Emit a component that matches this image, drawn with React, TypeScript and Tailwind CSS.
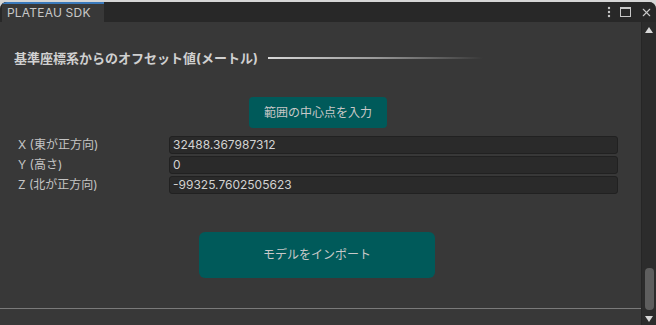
import { X } from "lucide-react"

const jp = "font-['Inter','Noto_Sans_CJK_JP',sans-serif]"

function Field({ label, value }: { label: string; value: string }) {
  return (
    <div className="flex items-center h-[20px]">
      <div className="w-[169px] pl-[18px] text-[12px] text-[#c4c4c4] leading-none">{label}</div>
      <div className="w-[449px] h-[18px] bg-[#2a2a2a] border border-[#212121] rounded-[3px] flex items-center px-[3px] text-[12px] text-[#d2d2d2] leading-none">
        {value}
      </div>
    </div>
  )
}

export default function App() {
  return (
    <div className={`w-[656px] h-[325px] bg-[#d6d6d6] pt-[2px] ${jp}`}>
      <div className="h-[323px] flex flex-col rounded-t-[7px] overflow-hidden bg-[#383838]">
        {/* tab bar */}
        <div className="h-[20px] bg-[#282828] flex items-stretch shrink-0">
          <div className="w-[102px] ml-[2px] bg-[#383838] border-t-2 border-[#3a79bb] flex items-center pl-[5px] text-[12px] text-[#c8c8c8] tracking-[0.2px]">
            PLATEAU SDK
          </div>
          <div className="flex-1" />
          <div className="flex items-center gap-[9px] pr-[3px] text-[#c8c8c8]">
            <svg width="4" height="12" viewBox="0 0 4 12">
              <circle cx="2" cy="2" r="1.2" fill="#c8c8c8" />
              <circle cx="2" cy="6" r="1.2" fill="#c8c8c8" />
              <circle cx="2" cy="10" r="1.2" fill="#c8c8c8" />
            </svg>
            <div className="w-[11px] h-[10px] border border-[#c8c8c8] border-t-2" />
            <X size={13} strokeWidth={2} />
          </div>
        </div>

        <div className="flex flex-1 min-h-0">
          {/* main */}
          <div className="flex-1 flex flex-col">
            <div className="flex items-center pl-[14px] pt-[26px] h-[46px]">
              <span className="text-[13px] font-bold text-[#d0d0d0] leading-[20px]">基準座標系からのオフセット値(メートル)</span>
              <div className="ml-[10px] w-[215px] h-[2px] bg-gradient-to-r from-[#d8d8d8] via-[#9a9a9a] to-transparent" />
            </div>

            <div className="flex justify-center pt-[29px] pr-[5px]">
              <div className="w-[138px] h-[31px] rounded-[4px] bg-[#005a5a] flex items-center justify-center text-[12px] text-[#c8c8c8]">
                範囲の中心点を入力
              </div>
            </div>

            <div className="flex flex-col pt-[7px]">
              <Field label="X (東が正方向)" value="32488.367987312" />
              <Field label="Y (高さ)" value="0" />
              <Field label="Z (北が正方向)" value="-99325.7602505623" />
            </div>

            <div className="flex justify-center pt-[37px] pr-[7px]">
              <div className="w-[236px] h-[46px] rounded-[6px] bg-[#005a5a] flex items-center justify-center text-[12px] text-[#c8c8c8]">
                モデルをインポート
              </div>
            </div>

            <div className="flex-1" />
            <div className="h-[1px] bg-[#7a7a7a] mb-[16px]" />
          </div>

          {/* scrollbar */}
          <div className="w-[15px] bg-[#2c2c2c] border-l border-[#262626] flex flex-col items-center pt-[5px] pb-[3px]">
            <svg width="8" height="6" viewBox="0 0 8 6"><path d="M0 6 L4 0 L8 6 Z" fill="#d8d8d8" /></svg>
            <div className="flex-1" />
            <div className="w-[9px] h-[42px] rounded-[4px] bg-[#5e5e5e] mb-[6px]" />
            <svg width="8" height="6" viewBox="0 0 8 6"><path d="M0 0 L8 0 L4 6 Z" fill="#d8d8d8" /></svg>
          </div>
        </div>
      </div>
    </div>
  )
}
